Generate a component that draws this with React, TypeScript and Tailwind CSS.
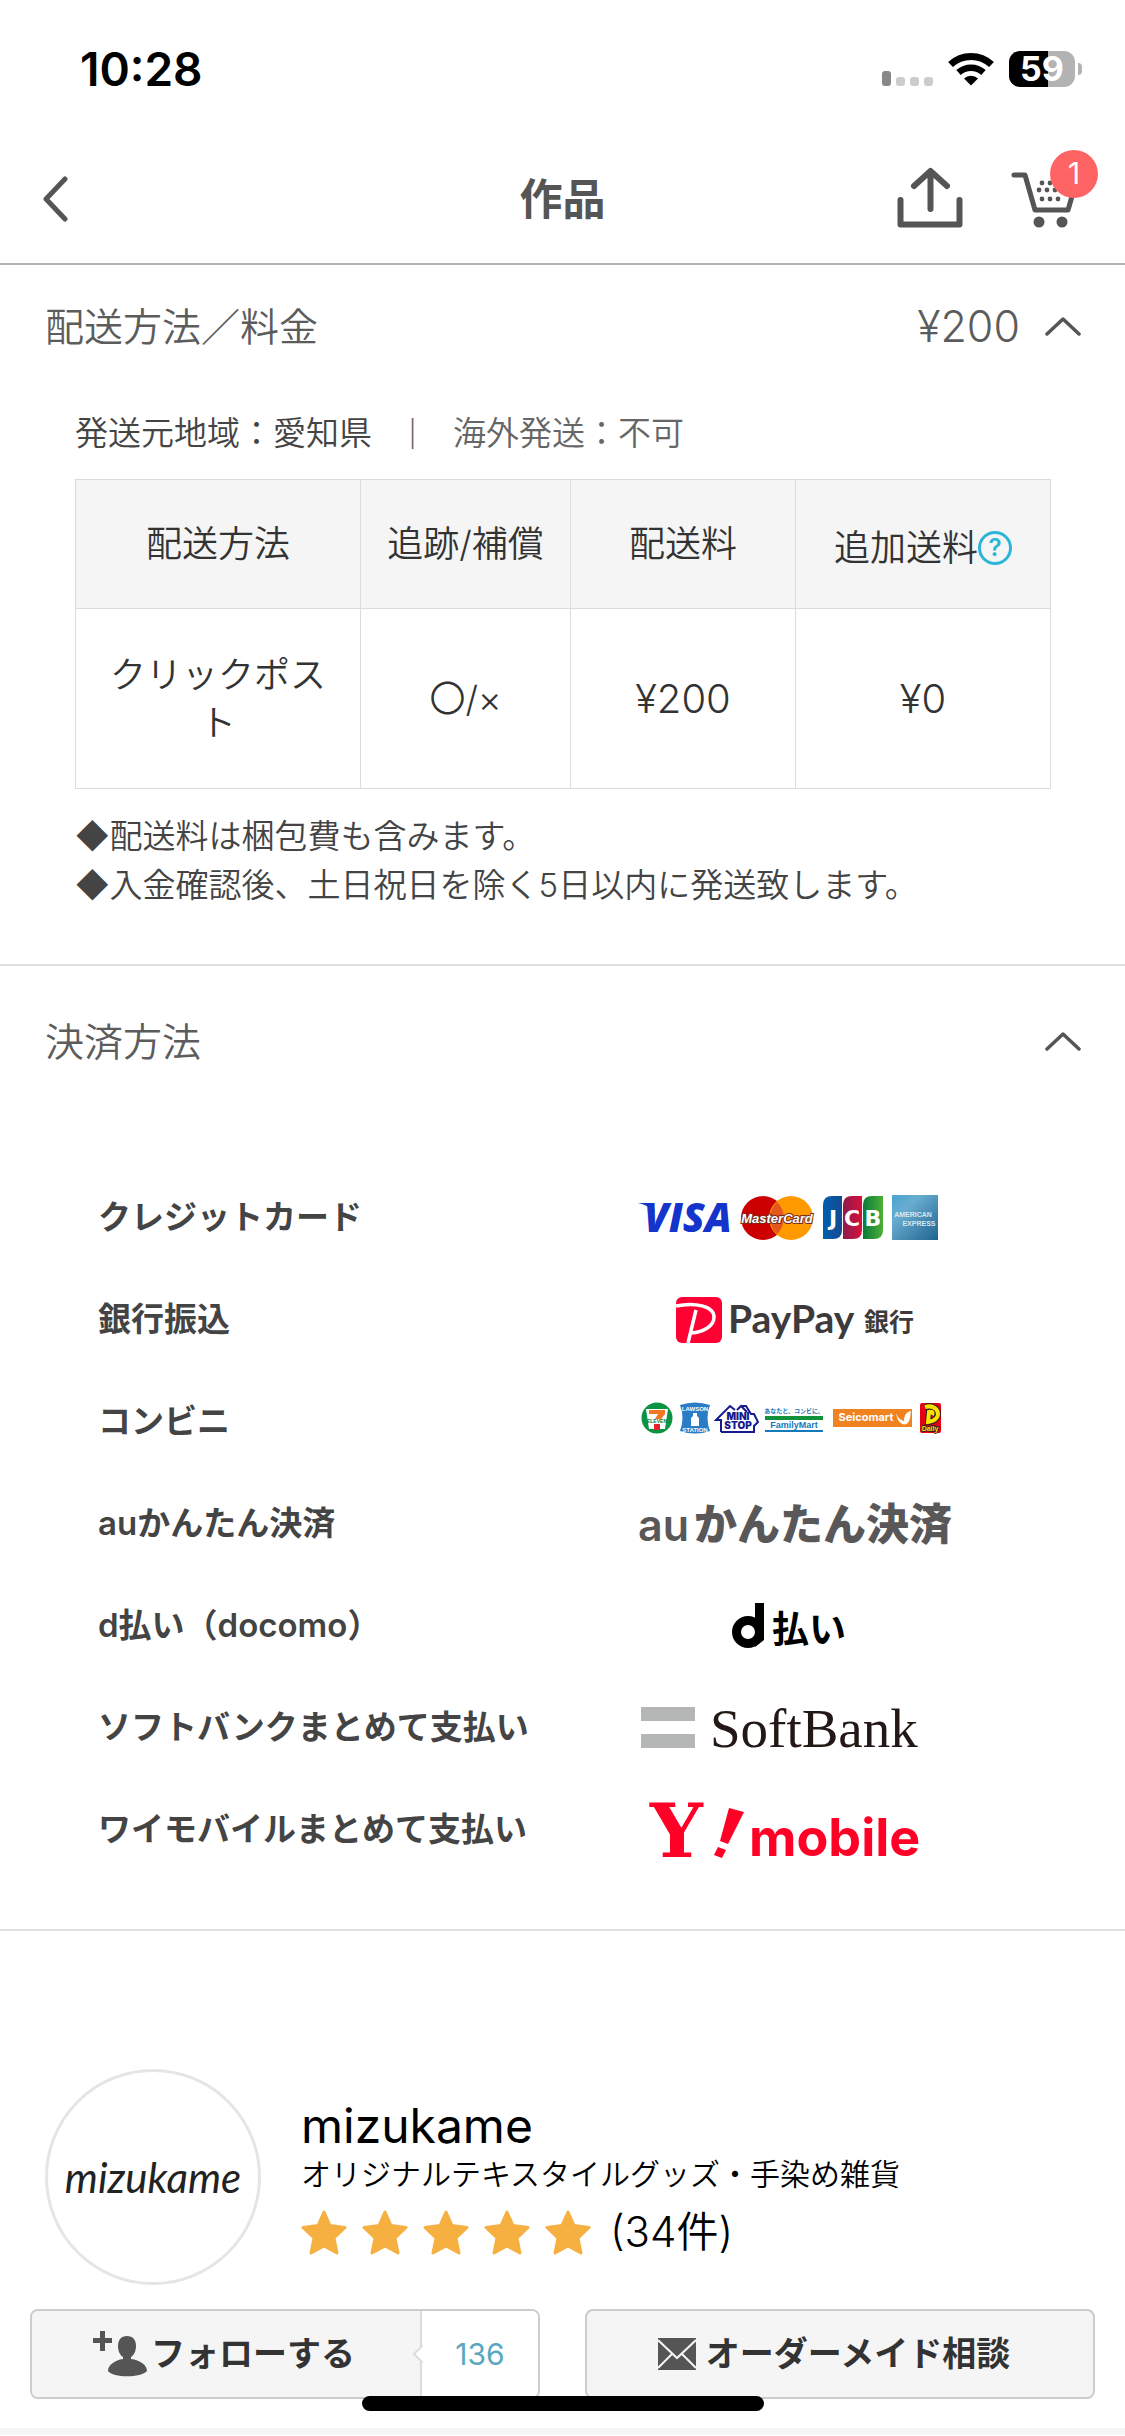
import { useState, ReactNode } from 'react'

const BackIcon = ({ className }: { className?: string }) => (
  <svg className={className} viewBox="0 0 26 46" fill="none" stroke="#555" strokeWidth={5} strokeLinecap="round" strokeLinejoin="round">
    <path d="M23 3 4 23 23 43" />
  </svg>
)

const ShareIcon = ({ className }: { className?: string }) => (
  <svg className={className} viewBox="0 0 68 62" fill="none" stroke="#555" strokeWidth={6} strokeLinecap="round" strokeLinejoin="round">
    <path d="M34.500 42V5M18 19 34.500 4 51 19" />
    <path d="M4.500 33v24.500h59V33" />
  </svg>
)

const CartIcon = ({ className }: { className?: string }) => (
  <svg className={className} viewBox="0 0 64 60" fill="none">
    <path d="M4 7h11l10 35h33l5-17" stroke="#555" strokeWidth={5} strokeLinecap="round" strokeLinejoin="round" />
    <g fill="#555">
      <circle cx="29" cy="54" r="5.500" />
      <circle cx="52" cy="54" r="5.500" />
      {[[32, 15], [40, 15], [48, 15], [29, 22], [37, 22], [45, 22], [53, 22], [32, 31], [40, 31], [48, 31]].map(([x, y]) => (
        <circle key={`${x}-${y}`} cx={x} cy={y} r="2.400" />
      ))}
    </g>
  </svg>
)

const ChevronIcon = ({ className }: { className?: string }) => (
  <svg className={className} viewBox="0 0 36 20" fill="none" stroke="#555" strokeWidth={3.500} strokeLinecap="round" strokeLinejoin="round">
    <path d="M2 18 18 3l16 15" />
  </svg>
)

const WifiIcon = ({ className }: { className?: string }) => (
  <svg className={className} viewBox="0 0 46 34" fill="none" stroke="#000" strokeWidth={7}>
    <path d="M2.500 12.500a30 30 0 0 1 41 0" />
    <path d="M10.500 20.500a18.500 18.500 0 0 1 25 0" strokeWidth={6.500} />
    <path d="M16 26.500a10.500 10.500 0 0 1 14 0l-7 7z" fill="#000" stroke="none" />
  </svg>
)

const StarIcon = ({ className }: { className?: string }) => (
  <svg className={className} viewBox="0 0 46 46" fill="#f5b041" stroke="#f5b041" strokeWidth={3} strokeLinejoin="round">
    <path d="m23 3 6 13.500 15 2-11 10.500 3 15-13-7-13 7 3-15L2 18.500l15-2z" />
  </svg>
)

const FollowIcon = ({ className }: { className?: string }) => (
  <svg className={className} viewBox="0 0 54 46" fill="#555">
    <path d="M7 0h5v7h7v5h-7v8H7v-8H0V7h7z" />
    <path d="M34 5c-6 0-9 4-9 10 0 5 2 9 5 11v2c-8 1-15 6-15 12 5 7 33 7 39 0 0-6-7-11-16-12v-2c3-2 5-6 5-11 0-6-3-10-9-10z" />
  </svg>
)

const MailIcon = ({ className }: { className?: string }) => (
  <svg className={className} viewBox="0 0 38 32">
    <path fill="#555" d="M0 0h38v32H0z" />
    <path d="m0 2 19 18L38 2M0 30l14-14M38 30 24 16" fill="none" stroke="#f5f5f5" strokeWidth={2} />
  </svg>
)

const CreditCardLogos = () => (
  <svg className="w-[300px] h-[70px]" viewBox="0 -12 300 70" role="img" aria-label="VISA MasterCard JCB American Express">
    <defs>
      <linearGradient id="jcbBlue"><stop stopColor="#005fae" /><stop offset="1" stopColor="#164a90" /></linearGradient>
      <linearGradient id="jcbRed"><stop stopColor="#8c1c4c" /><stop offset="1" stopColor="#d8103c" /></linearGradient>
      <linearGradient id="jcbGreen"><stop stopColor="#0b7a3c" /><stop offset="1" stopColor="#4cb036" /></linearGradient>
      <linearGradient id="amex" x1="0" y1="0" x2="1" y2="1"><stop stopColor="#4ba3d0" /><stop offset=".3" stopColor="#69add0" /><stop offset="1" stopColor="#1f6390" /></linearGradient>
    </defs>
    <path d="M0 8h14l3 9Q10 10 0 8" fill="#1434cb" />
    <text x="6" y="37" fontFamily="Open Sans" fontWeight="800" fontStyle="italic" fontSize="40" fill="#1434cb">VISA</text>
    <circle cx="125" cy="23" r="22" fill="#c00" />
    <circle cx="153" cy="23" r="22" fill="#f90" />
    <path d="M139 7a22 22 0 0 1 0 32 22 22 0 0 1 0-32" fill="#e2571c" />
    <text x="139" y="28" textAnchor="middle" fontFamily="Liberation Sans" fontWeight="700" fontStyle="italic" fontSize="13" fill="#fff" stroke="#7a2a1a" strokeWidth="2" paintOrder="stroke">MasterCard</text>
    <path d="M185 10q0-9 9-9h10v34q0 9-9 9h-10z" fill="url(#jcbBlue)" />
    <path d="M205 10q0-9 9-9h10v34q0 9-9 9h-10z" fill="url(#jcbRed)" />
    <path d="M225 10q0-9 9-9h11v34q0 9-9 9h-11z" fill="url(#jcbGreen)" />
    <g fontFamily="DejaVu Sans" fontWeight="700" fontSize="22" fill="#fff" textAnchor="middle">
      <text x="195" y="31">J</text>
      <text x="214" y="31">C</text>
      <text x="235" y="31">B</text>
    </g>
    <path d="M254 0h46v45h-46z" fill="url(#amex)" />
    <text x="275" y="22" textAnchor="middle" fontFamily="Liberation Sans" fontWeight="700" fontSize="7" fill="#d5e8f2">AMERICAN</text>
    <text x="281" y="31" textAnchor="middle" fontFamily="Liberation Sans" fontWeight="700" fontSize="7" fill="#d5e8f2">EXPRESS</text>
  </svg>
)

const PayPayLogo = () => (
  <svg className="w-[240px] h-[70px]" viewBox="-2 -12 240 70" role="img" aria-label="PayPay 銀行">
    <rect width="46" height="46" rx="6" fill="#ff0033" />
    <path d="M0 9c19-4 38 0 38 11 0 9-10 15-23 16M20 13l-8 33" fill="none" stroke="#fff" strokeWidth="3.500" />
    <text x="52" y="36" fontFamily="Lato" fontWeight="700" fontSize="39" fill="#3c3a3a">PayPay</text>
    <text x="188" y="34" fontFamily="Noto Sans CJK JP" fontWeight="700" fontSize="25" fill="#3c3a3a">銀行</text>
  </svg>
)

const ConvenienceLogos = () => (
  <svg className="w-[304px] h-10" viewBox="0 0 304 40" role="img" aria-label="セブンイレブン ローソン ミニストップ ファミリーマート セイコーマート デイリー">
    <circle cx="19" cy="16" r="15.500" fill="#0b9344" />
    <path d="M8 7h22l-3 20H11z" fill="#fff" />
    <path d="M11 8h16v4l-4 5h-6l3-5h-9z" fill="#f47721" />
    <path d="M16 22h6v6h-6z" fill="#e3222b" />
    <text x="19" y="21" textAnchor="middle" fontFamily="Liberation Sans" fontWeight="700" fontSize="5" fill="#0b7a3c">ELEVEN</text>
    <path d="M42 3q15-5 30 0-5 13 0 26-15 5-30 0 5-13 0-26z" fill="#2a7cc4" />
    <path d="M55 11h4v3l2 2v8h-8v-8l2-2z" fill="#fff" />
    <text x="57" y="9" textAnchor="middle" fontFamily="Liberation Sans" fontWeight="700" fontSize="6" fill="#fff">LAWSON</text>
    <text x="57" y="30" textAnchor="middle" fontFamily="Liberation Sans" fontWeight="700" fontSize="6" fill="#fff">STATION</text>
    <path d="M83 30V18h-5L92 4l5 4M99 8l4-4 6 6M104 4h4l5 8h3l4 8-4 4v6H83" fill="none" stroke="#171a8c" strokeWidth="2" />
    <text x="100" y="18" textAnchor="middle" fontFamily="Inter" fontWeight="900" fontSize="10" fill="#171a8c">MINI</text>
    <text x="100" y="27" textAnchor="middle" fontFamily="Inter" fontWeight="900" fontSize="10" fill="#171a8c">STOP</text>
    <text x="156" y="11" textAnchor="middle" fontFamily="Noto Sans CJK JP" fontWeight="700" fontSize="6" fill="#1679b9">あなたと、コンビに、</text>
    <path d="M127 14h58v4h-58z" fill="#109139" />
    <text x="156" y="26" textAnchor="middle" fontFamily="Liberation Sans" fontWeight="700" fontSize="9" fill="#1679b9">FamilyMart</text>
    <path d="M127 28h58v2h-58z" fill="#1679b9" />
    <path d="M195 7h79v18h-79z" fill="#f08220" />
    <text x="228" y="19" textAnchor="middle" fontFamily="Inter" fontWeight="700" fontSize="11" fill="#fff">Seicomart</text>
    <path d="M258 11c2 5 4 7 8 8 0-5 2-9 7-10-1 4 0 6-2 10-2 6-11 5-13-8z" fill="#fff" />
    <rect x="282" y="1" width="21" height="30" rx="2" fill="#e60012" />
    <path d="M287 5c14-4 19 13 3 15l1-10q5-1 3 3" fill="none" stroke="#222" strokeWidth="6" />
    <path d="M287 5c14-4 19 13 3 15l1-10q5-1 3 3" fill="none" stroke="#ffe100" strokeWidth="4" />
    <text x="292" y="29" textAnchor="middle" fontFamily="Liberation Sans" fontWeight="700" fontSize="7" fill="#ffe100" stroke="#222" strokeWidth="1.500" paintOrder="stroke">Daily</text>
  </svg>
)

const AuLogo = () => (
  <svg className="w-[324px] h-20 shrink-0" viewBox="0 0 324 80" role="img" aria-label="auかんたん決済">
    <text x="0" y="57" fontFamily="Inter" fontWeight="600" fontSize="43" fill="#595757">au</text>
    <text x="56" y="56" fontFamily="Noto Sans CJK JP" fontWeight="900" fontSize="43" fill="#595757">かんたん決済</text>
  </svg>
)

const DocomoLogo = () => (
  <svg className="w-[124px] h-[60px]" viewBox="0 0 124 60" role="img" aria-label="d払い">
    <circle cx="16" cy="36" r="11.500" fill="none" stroke="#000" strokeWidth="9" />
    <path d="M23 7h9v37l-9 7z" fill="#000" />
    <text x="40" y="47" fontFamily="Noto Sans CJK JP" fontWeight="700" fontSize="37" fill="#000">払い</text>
  </svg>
)

const SoftBankLogo = () => (
  <svg className="w-[290px] h-[70px]" viewBox="0 0 290 70" role="img" aria-label="SoftBank">
    <path d="M3 14h54v14H3zM3 41h54v14H3z" fill="#b5b6b6" />
    <text x="72" y="54" fontFamily="Liberation Serif" fontSize="55" fill="#231815">SoftBank</text>
  </svg>
)

const YMobileLogo = () => (
  <svg className="w-[290px] h-[90px]" viewBox="0 0 290 90" role="img" aria-label="Y!mobile">
    <text x="12" y="72" fontFamily="DejaVu Serif" fontWeight="700" fontSize="74" fill="#ff0027">Y</text>
    <path d="m91 23 15 4-16 32-8-3zM80 62l8 3-4 8-8-3z" fill="#ff0027" />
    <text x="111" y="71" fontFamily="Inter" fontWeight="700" fontSize="52" fill="#ff0027">mobile</text>
  </svg>
)

const payments: { name: string; logo: ReactNode; centered?: boolean }[] = [
  { name: 'クレジットカード', logo: <CreditCardLogos /> },
  { name: '銀行振込', logo: <PayPayLogo />, centered: true },
  { name: 'コンビニ', logo: <ConvenienceLogos /> },
  { name: 'auかんたん決済', logo: <AuLogo /> },
  { name: 'd払い（docomo）', logo: <DocomoLogo />, centered: true },
  { name: 'ソフトバンクまとめて支払い', logo: <SoftBankLogo /> },
  { name: 'ワイモバイルまとめて支払い', logo: <YMobileLogo /> },
]

function StatusBar() {
  return (
    <div className="flex items-center justify-between pt-[6px] pl-20 pr-[43px] h-[132px] text-black">
      <span className="text-[46px] leading-none font-semibold">10:28</span>
      <div className="flex items-center">
        <div className="flex items-end gap-[5px] h-[33px] mr-[15px]">
          <span className="w-[9px] h-[15px] rounded-[3px] bg-[#888]" />
          <span className="w-[9px] h-[9px] rounded-[3px] bg-[#ccc]" />
          <span className="w-[9px] h-[9px] rounded-[3px] bg-[#ccc]" />
          <span className="w-[9px] h-[9px] rounded-[3px] bg-[#ccc]" />
        </div>
        <WifiIcon className="w-[46px] h-[34px] mr-[15px]" />
        <div className="flex items-center justify-center w-[66px] h-9 rounded-[11px] bg-linear-to-r from-black from-59% to-[#b3b3b3] to-59% text-white text-[34px] leading-none font-bold">
          59
        </div>
        <span className="w-1 h-3 ml-[3px] rounded-r-full bg-[#b3b3b3]" />
      </div>
    </div>
  )
}

function Header() {
  return (
    <header className="grid grid-cols-[1fr_auto_1fr] items-center h-[133px] px-[27px] border-b-2 border-[#b2b2b2]">
      <button aria-label="戻る" className="justify-self-start pt-[3px] pl-[15px] pr-6">
        <BackIcon className="w-[26px] h-[46px]" />
      </button>
      <h1 className="pt-[3px] text-[43px] leading-none font-bold text-[#555]">作品</h1>
      <div className="flex items-center justify-end gap-[46px]">
        <button aria-label="共有">
          <ShareIcon className="w-[68px] h-[62px]" />
        </button>
        <button aria-label="カート" className="relative w-[88px]">
          <CartIcon className="w-16 h-[60px]" />
          <span className="absolute -top-[18px] right-0 flex items-center justify-center w-12 h-12 rounded-full bg-[#ff6464] text-white text-[30px]">
            1
          </span>
        </button>
      </div>
    </header>
  )
}

interface SectionProps {
  title: string
  value?: string
  headingClass: string
  children: ReactNode
}

function Section({ title, value, headingClass, children }: SectionProps) {
  const [isOpen, setIsOpen] = useState(true)

  return (
    <section className="border-b-2 border-[#e0e0e0]">
      <h2>
        <button
          onClick={() => setIsOpen(!isOpen)}
          aria-expanded={isOpen}
          className={`w-full flex items-center justify-between pl-[45px] pr-11 text-[39px] leading-none font-[350] text-[#5c5c5c] ${headingClass}`}
        >
          <span>{title}</span>
          <span className="flex items-center gap-[25px]">
            {value && <span className="text-[43px]">{value}</span>}
            <ChevronIcon className={isOpen ? 'w-9 h-5' : 'w-9 h-5 rotate-180'} />
          </span>
        </button>
      </h2>
      {isOpen && children}
    </section>
  )
}

function ShippingTable() {
  return (
    <table className="w-full table-fixed border-collapse text-center text-[36px] leading-[48px] text-[#333] [&_th]:border [&_td]:border [&_th]:border-[#dcdcdc] [&_td]:border-[#dcdcdc]">
      <colgroup>
        <col className="w-[285px]" />
        <col className="w-[210px]" />
        <col className="w-[225px]" />
        <col className="w-[255px]" />
      </colgroup>
      <thead className="bg-[#f5f5f5]">
        <tr className="h-[129px]">
          <th className="font-[350]">配送方法</th>
          <th className="font-[350]">追跡/補償</th>
          <th className="font-[350]">配送料</th>
          <th className="pt-[7px] font-[350]">
            <span className="inline-flex items-center">
              追加送料
              <button
                aria-label="追加送料とは"
                className="flex items-center justify-center w-[34px] h-[34px] rounded-full border-[3px] border-[#2bb5d8] text-[#2bb5d8] text-2xl leading-none font-semibold"
              >
                ?
              </button>
            </span>
          </th>
        </tr>
      </thead>
      <tbody>
        <tr className="h-[180px] font-[350]">
          <td className="px-6">クリックポスト</td>
          <td>〇/×</td>
          <td className="text-[40px]">¥200</td>
          <td className="text-[40px]">¥0</td>
        </tr>
      </tbody>
    </table>
  )
}

function Profile() {
  return (
    <section className="pt-[138px] pb-[29px] px-[30px]">
      <div className="flex pl-[15px]">
        <div className="flex items-center justify-center shrink-0 w-[216px] h-[216px] rounded-full border-[3px] border-[#e5e5e5]">
          <svg className="w-[184px] h-[60px]" viewBox="0 0 184 60" role="img" aria-label="mizukame">
            <text x="92" y="46" textAnchor="middle" fontFamily="Lato" fontStyle="italic" fontSize="42" fill="#222">mizukame</text>
          </svg>
        </div>
        <div className="pl-10 pt-[29px] text-black">
          <h2 className="text-[48px] leading-[56px]">mizukame</h2>
          <p className="text-[30px] leading-10 font-[350]">オリジナルテキスタイルグッズ・手染め雑貨</p>
          <div className="flex items-center gap-[15px] mt-[10px] leading-[56px]">
            {[1, 2, 3, 4, 5].map((n) => (
              <StarIcon key={n} className="w-[46px] h-[46px]" />
            ))}
            <span className="pl-1 text-[42px] font-[350]">(34件)</span>
          </div>
        </div>
      </div>

      <div className="grid grid-cols-2 gap-[45px] mt-6 text-[34px] leading-none font-bold text-[#333]">
        <div className="flex h-[90px] rounded-lg border-2 border-[#ccc] overflow-hidden">
          <button className="flex-1 flex items-center justify-center gap-1 pr-1 bg-[#f5f5f5]">
            <FollowIcon className="w-[54px] h-[46px]" />
            フォローする
          </button>
          <a href="#followers" className="relative flex items-center justify-center w-[118px] border-l-2 border-[#ddd] bg-white text-[30px] font-normal text-[#5ba7c0]">
            <svg className="absolute -left-[10px] top-[34px] w-[11px] h-[18px]" viewBox="0 0 11 18">
              <path d="M11 0 2 9l9 9" fill="#fff" stroke="#ddd" strokeWidth="2" />
            </svg>
            136
          </a>
        </div>
        <button className="flex items-center justify-center gap-[10px] h-[90px] pr-3 rounded-lg border-2 border-[#ccc] bg-[#f5f5f5]">
          <MailIcon className="w-[38px] h-8" />
          オーダーメイド相談
        </button>
      </div>
    </section>
  )
}

export default function App() {
  return (
    <div lang="ja" className="relative bg-white font-['Inter','Noto_Sans_CJK_JP',sans-serif] text-[#444]">
      <StatusBar />
      <Header />
      <main>
        <Section title="配送方法／料金" value="¥200" headingClass="h-[122px]">
          <div className="px-[75px] pb-[54px] text-[33px] leading-[49px] font-[350]">
            <div className="flex items-center h-[92px] text-[#666]">
              <span className="text-[#444]">発送元地域：愛知県</span>
              <span className="w-[81px] text-center text-[26px]">|</span>
              <span>海外発送：不可</span>
            </div>
            <ShippingTable />
            <p className="pt-[23px]">◆配送料は梱包費も含みます。</p>
            <p>◆入金確認後、土日祝日を除く5日以内に発送致します。</p>
          </div>
        </Section>

        <Section title="決済方法" headingClass="h-[150px]">
          <ul className="pt-[51px] pb-[48px] pl-[98px]">
            {payments.map(({ name, logo, centered }) => (
              <li key={name} className="flex items-center h-[102px]">
                <span className="w-[540px] text-[33px] font-semibold">{name}</span>
                <span className={centered ? 'flex justify-center w-[312px]' : 'flex w-[312px]'}>{logo}</span>
              </li>
            ))}
          </ul>
        </Section>

        <Profile />
      </main>
      <div className="h-[7px] bg-[#f5f5f5]" />
      <div className="absolute bottom-6 left-1/2 -translate-x-1/2 w-[402px] h-[15px] rounded-full bg-black" />
    </div>
  )
}
